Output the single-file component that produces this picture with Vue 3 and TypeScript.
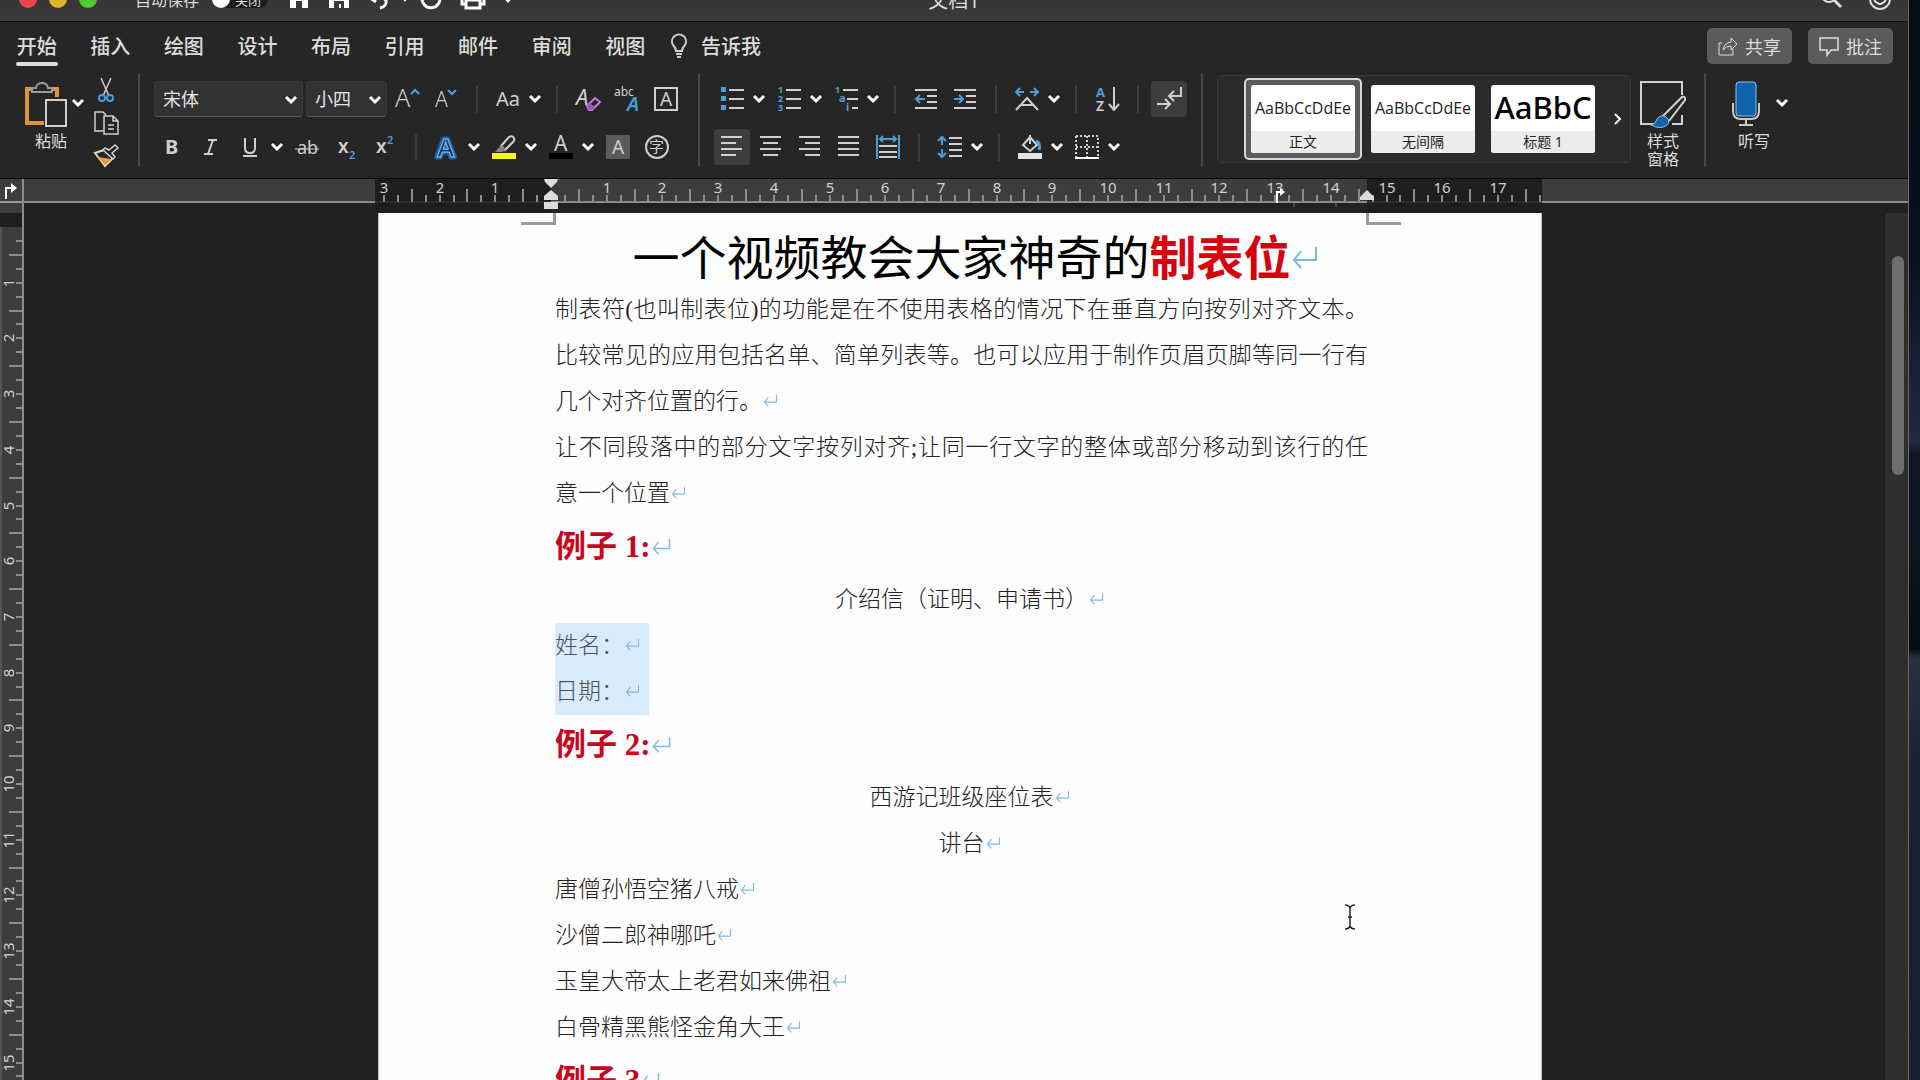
<script setup lang="ts">
import { ref } from 'vue'

interface Tool {
  icon?: string
  label?: string
  split?: boolean
  on?: boolean
  sep?: boolean
}

interface Tick {
  pos: number
  long: boolean
  num: string
}

interface DocLine {
  text: string
  kind: 'body' | 'full' | 'center' | 'heading' | 'selected'
  mark: boolean
}

const tabs: string[] = ['开始', '插入', '绘图', '设计', '布局', '引用', '邮件', '审阅', '视图']
const activeTab = ref('开始')
const autosave = ref(false)
const fontName = ref('宋体')
const fontSize = ref('小四')

const G = '#cfcfcf'
const B = '#4a9fd8'

const lines = (rows: number[][], color = G): string =>
  `<path d="${rows.map(([x1, x2, y]) => `M${x1} ${y}H${x2}`).join('')}" stroke="${color}" stroke-width="2" fill="none"/>`

const glyph = (ch: string, x: number, y: number, size: number, extra = `fill="${G}"`): string =>
  `<text x="${x}" y="${y}" font-size="${size}" ${extra}>${ch}</text>`

const icons: Record<string, string> = {
  grow: glyph('A', 0, 20, 25, `fill="${G}" font-weight="300"`) + `<path d="M16 7l4-4 4 4" fill="none" stroke="${B}" stroke-width="2"/>`,
  shrink: glyph('A', 1, 20, 21, `fill="${G}" font-weight="300"`) + `<path d="M14 3l4 4 4-4" fill="none" stroke="${B}" stroke-width="2"/>`,
  case: glyph('Aa', 0, 19, 20),
  clear: glyph('A', 0, 18, 22, `fill="${G}" font-style="italic"`) +
    '<path d="M11 19l8-8 5 4-8 8h-3z" fill="#262626" stroke="#c77ddb" stroke-width="2"/><path d="M11 19l3-3 5 4-3 3h-3z" fill="#a64fc0"/>',
  phonetic: glyph('abc', -1, 9, 12) + glyph('A', 12, 24, 20, `fill="${B}" font-style="italic" font-weight="600"`),
  border: `<rect x="1" y="1" width="22" height="22" fill="none" stroke="${G}" stroke-width="2"/>` + glyph('A', 6, 19, 19),
  bold: glyph('B', 5, 19, 20, `fill="${G}" font-weight="700"`),
  italic: `<path d="M9 5h9M5 19h9M14 5L9 19" stroke="${G}" stroke-width="2" fill="none"/>`,
  underline: `<path d="M7 3v10q0 5 5 5t5-5V3M5 21h14" stroke="${G}" stroke-width="2" fill="none"/>`,
  strike: glyph('ab', 2, 19, 18) + `<path d="M0 14h24" stroke="${G}" stroke-width="1"/>`,
  sub: glyph('x', 4, 18, 19, `fill="${G}" font-weight="600"`) + glyph('2', 15, 24, 11, `fill="${B}" font-weight="600"`),
  sup: glyph('x', 3, 18, 19, `fill="${G}" font-weight="600"`) + glyph('2', 14, 9, 11, `fill="${B}" font-weight="600"`),
  effects: glyph('A', 2, 22, 26, 'fill="#1d2c3c" stroke="#1464b4" stroke-width="5" stroke-linejoin="round" font-weight="600"') +
    glyph('A', 2, 22, 26, 'fill="#16304a" stroke="#8cc4f0" stroke-width="1" font-weight="600" aria-hidden="true"'),
  marker: `<path d="M9 11l8-9q3-2 5 1 1 2-1 4l-8 8z" fill="none" stroke="${G}" stroke-width="2"/><path d="M9 10l5 5-4 2H3z" fill="#8d8080"/><path d="M0 18h24v6H0z" fill="#f7f71c"/>`,
  color: glyph('A', 5, 16, 21) + '<path d="M0 18h24v6H0z" fill="#000"/>',
  shade: '<path d="M0 0h24v24H0z" fill="#5a5a5a"/>' + glyph('A', 6, 19, 19),
  circled: `<circle cx="12" cy="12" r="11" fill="none" stroke="${G}" stroke-width="2"/>` + glyph('字', 4, 17, 15),
  bullets: lines([[9, 24, 3], [9, 24, 12], [9, 24, 21]]) + `<path d="M1 0h5v5H1zM1 9h5v5H1zM1 18h5v5H1z" fill="${B}"/>`,
  numbers: lines([[9, 24, 3], [9, 24, 12], [9, 24, 21]]) +
    ['1', '2', '3'].map((n, i) => glyph(n, 1, 6 + i * 9, 9, `fill="${B}" font-weight="700"`)).join(''),
  levels: lines([[9, 24, 3], [13, 24, 12], [18, 24, 21]]) +
    glyph('1', 1, 6, 9, `fill="${B}" font-weight="700"`) + glyph('a', 5, 15, 11, `fill="${B}" font-weight="700"`) + glyph('i', 12, 24, 11, `fill="${B}" font-weight="700"`),
  outdent: lines([[1, 23, 3], [13, 23, 9], [13, 23, 15], [1, 23, 21]]) + `<path d="M11 12H2M6 8l-4 4 4 4" fill="none" stroke="${B}" stroke-width="2"/>`,
  indent: lines([[1, 23, 3], [13, 23, 9], [13, 23, 15], [1, 23, 21]]) + `<path d="M1 12h9M6 8l4 4-4 4" fill="none" stroke="${B}" stroke-width="2"/>`,
  asian: `<path d="M1 23l11-12 11 12M6 18h12" fill="none" stroke="${G}" stroke-width="2"/><path d="M9 5H1M5 1L1 5l4 4M15 5h8M19 1l4 4-4 4" fill="none" stroke="${B}" stroke-width="2"/>`,
  sort: glyph('A', 1, 10, 13, `fill="${B}" font-weight="700"`) + glyph('Z', 1, 24, 14, `fill="${G}" font-weight="600"`) +
    `<path d="M19 0v23M14 17l5 6 5-6" fill="none" stroke="${G}" stroke-width="2"/>`,
  marks: `<path d="M24 0v9H13M17 4l-5 5 5 5M0 17h12M8 12l5 5-5 5" fill="none" stroke="${G}" stroke-width="2"/>`,
  left: lines([[1, 22, 2], [1, 16, 8], [1, 22, 14], [1, 16, 20]]),
  center: lines([[1, 22, 2], [4, 19, 8], [1, 22, 14], [4, 19, 20]]),
  right: lines([[1, 22, 2], [7, 22, 8], [1, 22, 14], [7, 22, 20]]),
  justify: lines([[1, 22, 2], [1, 22, 8], [1, 22, 14], [1, 22, 20]]),
  distribute: lines([[3, 21, 11], [3, 21, 17], [3, 21, 22]]) +
    `<path d="M1 0v24M23 0v24M4 4h16M7 1L4 4l3 3M17 1l3 3-3 3" fill="none" stroke="${B}" stroke-width="2"/>`,
  spacing: lines([[11, 24, 3], [11, 24, 9], [11, 24, 15], [11, 24, 21]]) +
    `<path d="M4 2v8M0 6l4-4 4 4M4 14v8M0 18l4 4 4-4" fill="none" stroke="${B}" stroke-width="2"/>`,
  fill: `<path d="M5 10l7-8 7 8-7 6z" fill="none" stroke="${G}" stroke-width="2"/><path d="M12 9V0" stroke="${G}" stroke-width="2"/><path d="M18 6q5 2 3 9" fill="none" stroke="${B}" stroke-width="3"/><path d="M0 18h24v6H0z" fill="#e4e4e4"/>`,
  borders: `<path d="M1 1h22v21M1 1v21M12 1v21M1 12h22" fill="none" stroke="${G}" stroke-width="2" stroke-dasharray="2 2"/><path d="M0 23h24" stroke="#fff" stroke-width="2"/>`,
}

const sep: Tool = { sep: true }
const t = (icon: string, label: string, split = false, on = false): Tool => ({ icon, label, split, on })

const fontTop: Tool[] = [
  t('grow', '增大字号'), t('shrink', '减小字号'), sep, t('case', '更改大小写', true), sep,
  t('clear', '清除格式'), t('phonetic', '拼音指南'), t('border', '字符边框'),
]
const fontBottom: Tool[] = [
  t('bold', '加粗'), t('italic', '倾斜'), t('underline', '下划线', true), t('strike', '删除线'), t('sub', '下标'), t('sup', '上标'), sep,
  t('effects', '文本效果', true), t('marker', '突出显示', true), t('color', '字体颜色', true), t('shade', '字符底纹'), t('circled', '带圈字符'),
]
const paraTop: Tool[] = [
  t('bullets', '项目符号', true), t('numbers', '编号', true), t('levels', '多级列表', true), sep,
  t('outdent', '减少缩进'), t('indent', '增加缩进'), sep, t('asian', '中文版式', true), sep, t('sort', '排序'), sep,
  t('marks', '显示编辑标记', false, true),
]
const paraBottom: Tool[] = [
  t('left', '左对齐', false, true), t('center', '居中'), t('right', '右对齐'), t('justify', '两端对齐'), t('distribute', '分散对齐'), sep,
  t('spacing', '行距', true), sep, t('fill', '底纹', true), t('borders', '边框', true),
]

const CM = 55.7
const ticks = (origin: number, from: number, to: number): Tick[] => {
  const out: Tick[] = []
  for (let i = from; i <= to; i++) {
    if (i === 0) continue
    out.push({
      pos: Math.round(origin + (i * CM) / 4),
      long: Math.abs(i % 4) === 2,
      num: i % 4 === 0 ? String(Math.abs(i / 4)) : '',
    })
  }
  return out
}
const hTicks = ticks(173, -12, 71)
const vTicks = ticks(14, 1, 61)

const styleCards = [
  { name: '正文', sample: 'AaBbCcDdEe', big: false },
  { name: '无间隔', sample: 'AaBbCcDdEe', big: false },
  { name: '标题 1', sample: 'AaBbC', big: true },
]
const activeStyle = ref('正文')

const doc: DocLine[] = [
  { text: '制表符(也叫制表位)的功能是在不使用表格的情况下在垂直方向按列对齐文本。', kind: 'full', mark: false },
  { text: '比较常见的应用包括名单、简单列表等。也可以应用于制作页眉页脚等同一行有', kind: 'full', mark: false },
  { text: '几个对齐位置的行。', kind: 'body', mark: true },
  { text: '让不同段落中的部分文字按列对齐;让同一行文字的整体或部分移动到该行的任', kind: 'full', mark: false },
  { text: '意一个位置', kind: 'body', mark: true },
  { text: '例子 1:', kind: 'heading', mark: true },
  { text: '介绍信（证明、申请书）', kind: 'center', mark: true },
  { text: '姓名：', kind: 'selected', mark: true },
  { text: '日期：', kind: 'selected', mark: true },
  { text: '例子 2:', kind: 'heading', mark: true },
  { text: '西游记班级座位表', kind: 'center', mark: true },
  { text: '讲台', kind: 'center', mark: true },
  { text: '唐僧孙悟空猪八戒', kind: 'body', mark: true },
  { text: '沙僧二郎神哪吒', kind: 'body', mark: true },
  { text: '玉皇大帝太上老君如来佛祖', kind: 'body', mark: true },
  { text: '白骨精黑熊怪金角大王', kind: 'body', mark: true },
  { text: '例子 3', kind: 'heading', mark: true },
]
</script>

<template>
  <div class="desktop" lang="zh-CN">
    <div class="window">
      <header class="titlebar">
        <div class="titlerow">
          <div class="lights">
            <button class="light red" aria-label="关闭窗口"></button>
            <button class="light yellow" aria-label="最小化"></button>
            <button class="light green" aria-label="缩放"></button>
          </div>
          <label class="autosave">
            <span>自动保存</span>
            <input v-model="autosave" type="checkbox" />
            <span class="switch"><i></i>关闭</span>
          </label>
          <div class="quick">
            <button aria-label="主页"><svg width="22" height="20" viewBox="0 0 22 20"><path d="M2 9l9-8 9 8v10h-6v-7H8v7H2z" fill="#fff" /></svg></button>
            <button aria-label="保存"><svg width="22" height="20" viewBox="0 0 22 20"><path d="M1 1h16l4 4v14H1z" fill="#fff" /><path d="M6 12h10v7h-3v-4h-2v4H6z" fill="#383838" /></svg></button>
            <button aria-label="撤消"><svg width="22" height="20" viewBox="0 0 22 20"><path d="M7 3L2 9l6 4M2 9h10q7 0 6 5-1 4-6 5" fill="none" stroke="#fff" stroke-width="3" /></svg></button>
            <svg class="chev" width="8" height="6" viewBox="0 0 8 6"><path d="M0 0h8L4 6z" fill="#fff" /></svg>
            <button aria-label="重复"><svg width="22" height="20" viewBox="0 0 22 20"><path d="M5 3a9 9 0 1 0 12 0" fill="none" stroke="#fff" stroke-width="3" /></svg></button>
            <button aria-label="打印"><svg width="26" height="22" viewBox="0 0 26 22"><path d="M6 6V1h14v5M5 16H2V6h22v10h-3M6 12h14v8H6z" fill="none" stroke="#fff" stroke-width="3" /></svg></button>
            <svg class="more" width="14" height="10" viewBox="0 0 14 10"><path d="M0 1h14L7 9z" fill="#fff" /></svg>
          </div>
          <span class="doctitle">文档1</span>
          <div class="titleright">
            <button aria-label="搜索"><svg width="24" height="24" viewBox="0 0 24 24"><circle cx="9" cy="8" r="7" fill="none" stroke="#ddd" stroke-width="2" /><path d="M14 13l7 7" stroke="#ddd" stroke-width="3" /></svg></button>
            <button aria-label="反馈"><svg width="24" height="24" viewBox="0 0 24 24"><circle cx="12" cy="12" r="10" fill="none" stroke="#ddd" stroke-width="2" /><path d="M6 13q6 8 12 0" fill="none" stroke="#ddd" stroke-width="2" /></svg></button>
          </div>
        </div>
      </header>

      <nav class="tabbar">
        <div class="tabs" role="tablist">
          <button v-for="tab in tabs" :key="tab" role="tab" class="tab" :class="{ active: tab === activeTab }" :aria-selected="tab === activeTab" @click="activeTab = tab">{{ tab }}</button>
        </div>
        <button class="tell">
          <svg width="18" height="26" viewBox="0 0 18 26"><path d="M6 18q0-3-3-6a7 7 0 1 1 12 0q-3 3-3 6zM6 21h6M7 24h4" fill="none" stroke="#cfcfcf" stroke-width="2" /></svg>
          告诉我
        </button>
        <div class="actions">
          <button class="pill">
            <svg width="20" height="20" viewBox="0 0 20 20"><path d="M4 7H1v12h14v-6M5 14q1-7 8-8V2l6 6-6 6v-4q-5 0-8 4z" fill="none" stroke="#ddd" stroke-width="1" /></svg>
            共享
          </button>
          <button class="pill">
            <svg width="20" height="20" viewBox="0 0 20 20"><path d="M1 2h18v12h-7l-4 5v-5H1z" fill="none" stroke="#ddd" stroke-width="1.5" /></svg>
            批注
          </button>
        </div>
      </nav>

      <section class="ribbon">
        <div class="group clipboard">
          <div class="paste">
            <button class="bigbtn">
              <svg width="42" height="46" viewBox="0 0 42 46">
                <path d="M8 8H2v34h17M26 8h6v8" fill="none" stroke="#dc9639" stroke-width="4" />
                <path d="M7 11V7h4q1-5 6-5t6 5h4v4z" fill="#262626" stroke="#9a9a9a" stroke-width="2" />
                <path d="M21 19h20v26H21z" fill="#262626" stroke="#d0d0d0" stroke-width="2" />
              </svg>
              <span>粘贴</span>
            </button>
            <svg class="drop" width="12" height="8" viewBox="0 0 12 8"><path d="M1 1l5 5 5-5" /></svg>
          </div>
          <div class="clipcol">
            <button aria-label="剪切"><svg width="24" height="24" viewBox="0 0 24 24"><path d="M7 0l8 18M17 0L9 18" stroke="#cfcfcf" stroke-width="1.5" /><circle cx="8" cy="20" r="3" fill="none" stroke="#4a9fd8" stroke-width="2" /><circle cx="16" cy="20" r="3" fill="none" stroke="#4a9fd8" stroke-width="2" /></svg></button>
            <button aria-label="复制"><svg width="26" height="24" viewBox="0 0 26 24"><path d="M9 20H1V1h8l3 3M10 5h9l5 5v13H10zM19 5v5h5M14 14h6M14 18h6" fill="none" stroke="#cfcfcf" stroke-width="1.5" /></svg></button>
            <button aria-label="格式刷"><svg width="26" height="24" viewBox="0 0 26 24"><path d="M1 9l10 13 8-8-9-8z" fill="#262626" stroke="#e8d7b0" stroke-width="2" /><path d="M4 13l13 2-6 6z" fill="#e39b35" /><path d="M9 6l10 9 2-2-3-4 6-5-3-3-6 5-4-2z" fill="#262626" stroke="#cfcfcf" stroke-width="1.5" /></svg></button>
          </div>
        </div>

        <div class="group">
          <div class="row">
            <label class="combo name"><select v-model="fontName" aria-label="字体"><option>宋体</option></select><svg width="12" height="8" viewBox="0 0 12 8"><path d="M1 1l5 5 5-5" /></svg></label>
            <label class="combo size"><select v-model="fontSize" aria-label="字号"><option>小四</option></select><svg width="12" height="8" viewBox="0 0 12 8"><path d="M1 1l5 5 5-5" /></svg></label>
            <div class="tools">
              <template v-for="(tool, i) in fontTop" :key="i">
                <i v-if="tool.sep" class="minisep"></i>
                <button v-else class="tool" :class="{ on: tool.on, split: tool.split }" :aria-label="tool.label">
                  <svg class="ico" width="24" height="24" viewBox="0 0 24 24" v-html="icons[tool.icon!]"></svg>
                  <svg v-if="tool.split" class="drop" width="12" height="8" viewBox="0 0 12 8"><path d="M1 1l5 5 5-5" /></svg>
                </button>
              </template>
            </div>
          </div>
          <div class="row">
            <div class="tools inset">
              <template v-for="(tool, i) in fontBottom" :key="i">
                <i v-if="tool.sep" class="minisep"></i>
                <button v-else class="tool" :class="{ on: tool.on, split: tool.split }" :aria-label="tool.label">
                  <svg class="ico" width="24" height="24" viewBox="0 0 24 24" v-html="icons[tool.icon!]"></svg>
                  <svg v-if="tool.split" class="drop" width="12" height="8" viewBox="0 0 12 8"><path d="M1 1l5 5 5-5" /></svg>
                </button>
              </template>
            </div>
          </div>
        </div>

        <div class="group">
          <div v-for="(list, r) in [paraTop, paraBottom]" :key="r" class="row">
            <div class="tools inset">
              <template v-for="(tool, i) in list" :key="i">
                <i v-if="tool.sep" class="minisep"></i>
                <button v-else class="tool" :class="{ on: tool.on, split: tool.split }" :aria-label="tool.label">
                  <svg class="ico" width="24" height="24" viewBox="0 0 24 24" v-html="icons[tool.icon!]"></svg>
                  <svg v-if="tool.split" class="drop" width="12" height="8" viewBox="0 0 12 8"><path d="M1 1l5 5 5-5" /></svg>
                </button>
              </template>
            </div>
          </div>
        </div>

        <div class="group styles">
          <div class="gallery">
            <button v-for="s in styleCards" :key="s.name" class="card" :class="{ chosen: s.name === activeStyle }" @click="activeStyle = s.name">
              <span class="face">
                <span class="sample" :class="{ big: s.big }">{{ s.sample }}</span>
                <span class="cardname">{{ s.name }}</span>
              </span>
            </button>
            <button class="next" aria-label="更多样式"><svg width="8" height="12" viewBox="0 0 8 12"><path d="M1 1l5 5-5 5" fill="none" stroke="#fff" stroke-width="2" /></svg></button>
          </div>
          <button class="bigbtn pane">
            <svg width="46" height="46" viewBox="0 0 46 46">
              <path d="M42 14V1H1v42h14M42 34v9H32" fill="none" stroke="#cfcfcf" stroke-width="2" />
              <path d="M22 36L42 16q4-1 3 3L29 40" fill="#262626" stroke="#cfcfcf" stroke-width="2" />
              <path d="M11 44q5-1 6-6 4-5 9-2 5 4 1 8-6 5-16 0z" fill="#1062ad" stroke="#8cc4f0" stroke-width="1" />
            </svg>
            <span>样式<br />窗格</span>
          </button>
        </div>

        <div class="group dictate">
          <button class="bigbtn">
            <svg width="28" height="46" viewBox="0 0 28 46">
              <path d="M1 22v8q0 8 8 8h10q8 0 8-8v-8M14 38v6M7 44h14" fill="none" stroke="#cfc8bd" stroke-width="2" />
              <rect x="4" y="1" width="20" height="34" rx="3" fill="#1062ad" stroke="#8cc4f0" />
            </svg>
            <span>听写</span>
          </button>
          <svg class="drop" width="12" height="8" viewBox="0 0 12 8"><path d="M1 1l5 5 5-5" /></svg>
        </div>
      </section>

      <main class="workspace">
        <div class="corner"><svg width="14" height="16" viewBox="0 0 14 16"><path d="M3 16V5h6" fill="none" stroke="#fff" stroke-width="2" /><path d="M8 0l6 5-6 5z" fill="#fff" /></svg></div>
        <div class="hruler">
          <svg class="scale" width="1164" height="34" viewBox="0 0 1164 34">
            <rect x="-3" y="0" width="176" height="34" fill="#1e1e1e" />
            <rect x="989" y="0" width="175" height="34" fill="#1e1e1e" />
            <path d="M-3 23h176M989 23h175" stroke="#3a3a3a" />
            <g v-for="k in hTicks" :key="k.pos">
              <path :d="`M${k.pos} ${k.long ? 10 : 16}V23`" stroke="#8c8c8c" stroke-width="2" />
              <text v-if="k.num" :x="k.pos" y="14" text-anchor="middle">{{ k.num }}</text>
            </g>
            <path d="M166 0h14l-1 3-6 6-6-6zM173 11l7 6v4h-14v-4zM166 23h14v7h-14z" fill="#dcdcdc" />
            <path d="M989 11l7 7v3h-14v-3z" fill="#dcdcdc" />
            <path d="M899 24V13h4" fill="none" stroke="#fff" stroke-width="2" />
            <path d="M902 9l5 4-5 4z" fill="#fff" />
            <path d="M916 24v4M958 24v4" stroke="#777" />
          </svg>
        </div>

        <div class="vruler">
          <svg width="24" height="868" viewBox="0 0 24 868">
            <rect x="0" y="0" width="22" height="14" fill="#1e1e1e" />
            <g v-for="k in vTicks" :key="k.pos">
              <path :d="`M${k.long ? 9 : 16} ${k.pos}H23`" stroke="#8c8c8c" stroke-width="2" />
              <text v-if="k.num" x="0" y="0" :transform="`translate(14 ${k.pos}) rotate(-90)`" text-anchor="middle">{{ k.num }}</text>
            </g>
          </svg>
        </div>

        <div class="canvas">
          <article class="page">
            <div class="crops"><i class="crop l"></i><i class="crop r"></i></div>
            <div class="text">
              <h1>一个视频教会大家神奇的<b>制表位</b><svg class="mark" viewBox="0 0 26 22"><path d="M24 0v13H2M9 4l-7 9 7 8" /></svg></h1>
              <p v-for="(line, i) in doc" :key="i" :class="line.kind">{{ line.text }}<svg v-if="line.mark" class="mark" viewBox="0 0 26 22"><path d="M24 0v13H2M9 4l-7 9 7 8" /></svg></p>
            </div>
          </article>
          <svg class="ibeam" width="12" height="26" viewBox="0 0 12 26"><path d="M1 1q4 0 5 3 1-3 5-3M6 4v18M1 25q4 0 5-3 1 3 5 3M4 13h4" fill="none" stroke="#222" stroke-width="1.5" /></svg>
        </div>
        <div class="scrollbar"><div class="thumb"></div></div>
      </main>
    </div>
  </div>
</template>

<style>
html,
body {
  margin: 0;
  background: #060c16;
}
</style>

<style scoped>
.desktop {
  --ui: 'Noto Sans', 'Noto Sans CJK SC', sans-serif;
  display: flex;
  height: 100vh;
  overflow: hidden;
  padding-right: 11px;
  box-sizing: border-box;
  background: linear-gradient(#050c17 0, #08111f 24%, #1a2437 36%, #1e2840 41%, #121524 42%, #0c1420 52%, #050b13 60%, #2a303f 61%, #1b2233 70%, #171e2d 100%);
  font-family: var(--ui);
  color: #dcdcdc;
}
.window {
  flex: 1;
  min-width: 0;
  display: flex;
  flex-direction: column;
  background: #262626;
  border-right: 1px solid #6a6a6a;
}
button {
  font: inherit;
  color: inherit;
  background: none;
  border: 0;
  padding: 0;
  margin: 0;
  display: flex;
  align-items: center;
}
svg {
  display: block;
  flex: none;
  overflow: visible;
}
svg text,
.ico :deep(text) {
  font-family: var(--ui);
}

/* Title bar: its upper half lies above the top of the screen */
.titlebar {
  flex: none;
  box-sizing: border-box;
  height: 22px;
  display: flex;
  align-items: flex-end;
  overflow: hidden;
  background: linear-gradient(#363636, #3a3a3a);
  border-bottom: 1px solid #111;
}
.titlerow {
  position: relative;
  flex: 1;
  height: 44px;
  display: flex;
  align-items: center;
  padding: 0 16px 0 19px;
}
.lights {
  display: flex;
  gap: 12px;
}
.light {
  width: 18px;
  height: 18px;
  border-radius: 50%;
}
.red { background: #e8474a; }
.yellow { background: #dfb52c; }
.green { background: #4fcb2e; }
.autosave {
  display: flex;
  align-items: center;
  gap: 13px;
  margin-left: 38px;
  font-size: 16px;
}
.autosave input {
  position: absolute;
  opacity: 0;
}
.switch {
  display: flex;
  align-items: center;
  gap: 5px;
  width: 56px;
  height: 18px;
  border-radius: 9px;
  background: #1b1b1b;
  font-size: 13px;
}
.switch i {
  width: 18px;
  height: 18px;
  border-radius: 50%;
  background: #fff;
}
.quick {
  display: flex;
  align-items: center;
  gap: 18px;
  margin-left: 20px;
}
.quick .chev { margin: 0 -7px; }
.quick .more { margin-left: -3px; }
.doctitle {
  position: absolute;
  left: 0;
  right: 0;
  text-align: center;
  font-size: 20px;
  pointer-events: none;
}
.titleright {
  display: flex;
  gap: 24px;
  margin-left: auto;
}

.tabbar {
  flex: none;
  display: flex;
  align-items: center;
  height: 47px;
  padding: 0 15px 0 0;
}
.tabs {
  display: grid;
  grid-template-columns: repeat(9, 1fr);
  width: 662px;
  font-size: 20px;
  font-weight: 500;
}
.tab {
  justify-content: center;
  height: 40px;
  position: relative;
}
.tab.active::after {
  content: '';
  position: absolute;
  left: 16px;
  right: 16px;
  bottom: 0;
  height: 4px;
  border-radius: 2px;
  background: #dcdcdc;
}
.tell {
  gap: 13px;
  margin-left: 8px;
  font-size: 20px;
  font-weight: 500;
}
.actions {
  display: flex;
  gap: 16px;
  margin-left: auto;
}
.pill {
  justify-content: center;
  gap: 7px;
  width: 85px;
  height: 36px;
  border-radius: 5px;
  background: #5b5b5b;
  font-size: 18px;
}

.ribbon {
  flex: none;
  display: flex;
  padding: 4px 0 11px;
  height: 94px;
  border-bottom: 1px solid #0a0a0a;
}
.group {
  flex: none;
  display: flex;
  flex-direction: column;
  gap: 12px;
  padding: 8px 20px 0 14px;
  border-right: 2px solid #484848;
}
.clipboard {
  flex-direction: row;
  gap: 10px;
  padding: 5px 18px 0 25px;
}
.paste {
  display: flex;
  gap: 5px;
}
.paste .drop { margin-top: 21px; }
.paste .bigbtn {
  align-items: flex-end;
  padding-top: 3px;
}
.bigbtn {
  flex-direction: column;
  gap: 5px;
  font-size: 16px;
  line-height: 18px;
}
.clipcol {
  display: flex;
  flex-direction: column;
  gap: 9px;
}
.drop path,
.combo path {
  fill: none;
  stroke: #fff;
  stroke-width: 3;
}
.row {
  display: flex;
  align-items: center;
  height: 36px;
}
.combo {
  position: relative;
  margin-right: 3px;
}
.combo select {
  appearance: none;
  width: 100%;
  height: 36px;
  padding: 0 8px;
  border: 1px solid #3a3a3a;
  border-bottom-color: #5a5a5a;
  border-radius: 4px;
  background: #323232;
  color: #e4e4e4;
  font: 18px var(--ui);
}
.combo svg {
  position: absolute;
  right: 6px;
  top: 15px;
  pointer-events: none;
}
.name { width: 149px; }
.size { width: 81px; margin-right: 8px; }
.tools {
  display: flex;
  align-items: center;
  gap: 15px;
}
.inset { padding-left: 6px; }
.tool {
  height: 24px;
}
.split .drop { margin: 0 -3px 0 9px; }
.on {
  margin: 0 -6px;
  padding: 0 6px;
  height: 36px;
  border-radius: 4px;
  background: #3d3d3d;
}
.minisep {
  width: 2px;
  height: 27px;
  margin: 0 3px;
  background: #3e3e3e;
}

.styles {
  flex-direction: row;
  gap: 9px;
  padding: 2px 18px 0 14px;
}
.gallery {
  display: flex;
  align-items: center;
  height: 88px;
  padding: 0 8px 0 26px;
  box-sizing: border-box;
  border: 1px solid #3a3a3a;
  border-radius: 5px;
  background: #2b2b2b;
}
.card {
  padding: 5px;
  border: 2px solid transparent;
  border-radius: 5px;
  margin-right: 2px;
}
.chosen {
  background: #5b5b5b;
  border-color: #d8d8d8;
}
.face {
  display: flex;
  flex-direction: column;
  width: 104px;
  height: 68px;
  overflow: hidden;
  border-radius: 3px;
  background: #fff;
  color: #222;
}
.sample {
  height: 46px;
  line-height: 46px;
  text-align: center;
  font-family: 'Open Sans', sans-serif;
  font-size: 16px;
  font-weight: 400;
}
.sample.big {
  line-height: 44px;
  font-family: 'Noto Sans', sans-serif;
  font-size: 31px;
  font-weight: 500;
  color: #000;
}
.cardname {
  height: 22px;
  line-height: 22px;
  text-align: center;
  font-size: 14px;
  background: #ececec;
}
.next { margin-left: 10px; }
.pane {
  justify-content: flex-start;
  padding-top: 6px;
}
.dictate {
  flex-direction: row;
  gap: 6px;
  border: 0;
  padding: 8px 0 0 26px;
}
.dictate .bigbtn {
  align-items: flex-end;
  width: 38px;
}
.dictate .bigbtn svg { align-self: flex-start; }
.dictate .drop { margin-top: 18px; }

.workspace {
  flex: 1;
  min-height: 0;
  display: grid;
  grid-template-columns: 24px 1fr 23px;
  grid-template-rows: 34px minmax(0, 1fr);
  background: #212121;
}
.corner {
  display: flex;
  align-items: flex-start;
  padding: 4px 0 0 3px;
  box-sizing: border-box;
  border-right: 2px solid #8c8c8c;
  background: linear-gradient(#3d3d3d 22px, #999 22px, #999 24px, #3d3d3d 24px);
}
.hruler {
  grid-column: 2 / 4;
  display: flex;
  justify-content: center;
  padding-right: 12px;
  background: linear-gradient(#3d3d3d 22px, #8c8c8c 22px, #8c8c8c 24px, #212121 24px);
}
.scale text,
.vruler text {
  font-size: 15px;
  fill: #d0d0d0;
}
.vruler {
  overflow: hidden;
  box-sizing: border-box;
  background: linear-gradient(90deg, #555 2px, #3d3d3d 2px, #3d3d3d 22px, #8c8c8c 22px);
}
.canvas {
  position: relative;
  display: flex;
  justify-content: center;
  padding-left: 11px;
  overflow: hidden;
}
.page {
  flex: none;
  width: 1164px;
  height: 1640px;
  box-sizing: border-box;
  background: #fdfdfd;
  border: solid #bdbdbd;
  border-width: 0 1px;
  color: #222;
}
.crops {
  display: flex;
  justify-content: space-between;
  padding: 0 140px 0 142px;
  height: 14px;
}
.crop {
  width: 32px;
  height: 9px;
  border-bottom: 3px solid #9a9a9a;
}
.l { border-right: 3px solid #9a9a9a; }
.r { border-left: 3px solid #9a9a9a; }
.text {
  margin: 0 173px 0 176px;
  font-family: 'Liberation Serif', 'Noto Sans CJK SC', serif;
}
h1 {
  margin: 0;
  height: 60px;
  text-align: center;
  font: 400 47px / 56px 'Noto Sans CJK SC', sans-serif;
  white-space: nowrap;
  color: #000;
}
h1 b { color: #d9000d; }
p {
  margin: 0;
  height: 46px;
  font-size: 23px;
  line-height: 46px;
  font-weight: 300;
  white-space: nowrap;
}
.full { text-align: justify; text-align-last: justify; white-space: normal; }
.center { text-align: center; }
.heading {
  height: 60px;
  line-height: 60px;
  font-size: 31px;
  font-weight: 700;
  color: #c8051c;
}
.selected {
  width: 94px;
  background: #d9eafa;
  color: #465565;
}
.mark {
  display: inline-block;
  width: 15px;
  height: 12px;
  margin: 0 -16px 0 1px;
  vertical-align: 2px;
  fill: none;
  stroke: #7db8e8;
  stroke-width: 2;
}
h1 .mark {
  width: 26px;
  height: 22px;
  margin-right: -27px;
  vertical-align: 6px;
}
.heading .mark {
  width: 19px;
  height: 16px;
}
.ibeam {
  position: absolute;
  left: 1320px;
  top: 691px;
}
.scrollbar {
  background: #2e2e2e;
  padding: 43px 0 0 7px;
}
.thumb {
  width: 12px;
  height: 219px;
  border-radius: 6px;
  background: #6e6e6e;
}
</style>
